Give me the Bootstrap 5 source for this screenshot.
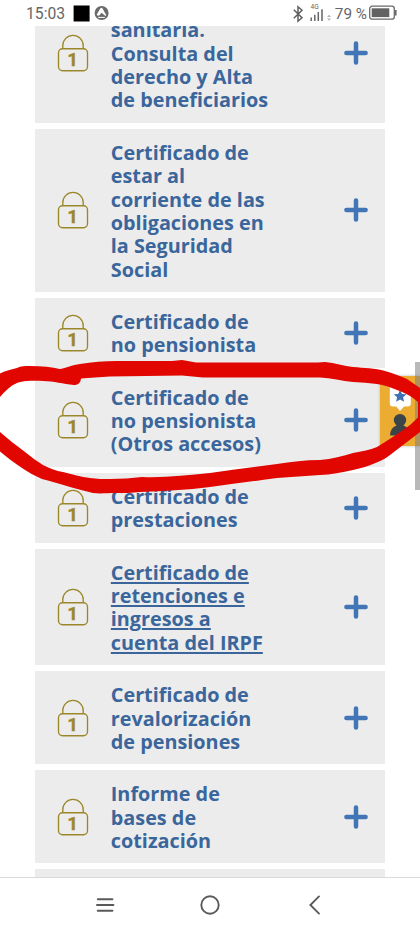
<!DOCTYPE html>
<html lang="es">
<head>
<meta charset="utf-8">
<meta name="viewport" content="width=device-width, initial-scale=1">
<title>Certificados</title>
<link href="https://cdn.jsdelivr.net/npm/bootstrap@5.3.0/dist/css/bootstrap.min.css" rel="stylesheet">
<style>
  body { font-family: "Open Sans", "Noto Sans", sans-serif; background: #fff; }
  .screen { width: 420px; height: 933px; }
  .status { height: 26px; padding: 1px 23px 0 26px; color: #666; font-family: Roboto, sans-serif; font-size: 15.7px; line-height: 26px; }
  .clock { width: 39px; }
  .charge { font-size: 15.3px; }
  .radios { margin-right: 1.5px; }
  .battery { margin-left: 2px; margin-top: -1px; }
  .viewer { height: 851px; }
  .services { margin: -43.1px 35px 0; gap: 5.83px; }
  .service { background: #ececec; padding: 11.67px 16px 11.67px 22px; }
  .service-first { height: 140px; }
  .service-title { position: relative; top: .5px; width: 200px; margin-left: 21.8px; color: #3a669b; font-weight: 700; font-size: 19.82px; line-height: 23.33px; white-space: nowrap; }
  .service-first .service-title { padding-top: 23.33px; }
  .service-title u { text-decoration-thickness: 1.6px; text-underline-offset: 2px; }
  .softkeys { height: 56px; border-top: 1px solid #dadada; padding: 0 94px; }
  .assist { right: 0; top: 375.5px; width: 40px; height: 70.5px; background: #ebac31; box-shadow: 0 0 3px #bbb; }
  .scroller { right: 0; top: 362px; width: 5px; height: 128px; background: #808080; opacity: .55; }
  .stroke-layer { left: 0; top: 0; }
</style>
</head>
<body>
<svg class="d-none">
  <symbol id="lock" viewBox="0 0 32 38">
    <g fill="none" stroke="#9b872b" stroke-width="1.35">
      <rect x="1.5" y="14.7" width="29" height="22" rx="4"/>
      <path d="M5.8 14.5V11.6a10.2 10.2 0 0 1 20.4 0v2.9"/>
    </g>
    <text x="15.6" y="32.4" text-anchor="middle" font-family="Roboto, sans-serif" font-weight="700" font-size="18.8" fill="#9b872b" stroke="#9b872b" stroke-width=".3">1</text>
  </symbol>
  <symbol id="plus" viewBox="0 0 24 24">
    <path d="M2.4 12h19.2M12 2.4v19.2" stroke="#4175b5" stroke-width="4.5" stroke-linecap="round"/>
  </symbol>
</svg>
<div class="screen position-relative overflow-hidden">
  <header class="status d-flex align-items-center justify-content-between">
    <div class="d-flex align-items-center">
      <span class="clock">15:03</span>
      <svg class="ms-2" width="36" height="18" viewBox="0 0 36 18">
        <path d="M.6 .5h16v16H.6z"/>
        <circle cx="28.6" cy="8" r="7" fill="#6a6a6a"/>
        <path d="M27.4 3.300L23.900 9.200q-.5 1.300.8 1.300h1.600l2.200-2.800 4 3.200.8-.6-3.600-6.500q-1.100-1.700-2.300-.5z" fill="#fff"/>
        <path d="M25.200 12.400h6.600" stroke="#fff" stroke-width="1"/>
      </svg>
    </div>
    <div class="d-flex align-items-center">
      <svg class="radios" width="41" height="26" viewBox="292 0 41 26">
        <path d="M293.8 8.7l8.2 8-4 3.5V5.8l4 3.5-8.2 8" fill="none" stroke="#5f5f5f" stroke-width="1.5"/>
        <text x="310.5" y="8" font-family="Roboto, sans-serif" font-size="6.6" fill="#666">4G</text>
        <path d="M311.2 16.5V20M314.8 13.8V20M318.3 11V20M322 8.2V20" stroke="#666" stroke-width="1.5"/>
        <path d="M327 16l2-2.3 2 2.3zM327 17.5l2 2.3 2-2.3z" fill="#b5b5b5"/>
      </svg>
      <span class="charge">79 %</span>
      <svg class="battery" width="28" height="16" viewBox="0 0 28 16">
        <rect x=".7" y="1.2" width="24.6" height="13" rx="2.5" fill="none" stroke="#6a6a6a" stroke-width="1.3"/>
        <path d="M2.7 3.3h17.6v8.8H2.7z" fill="#626262"/>
        <path d="M26.8 5v5.6" stroke="#6a6a6a" stroke-width="1.6"/>
      </svg>
    </div>
  </header>

  <main class="viewer overflow-hidden">
    <div class="services d-flex flex-column">
      <div class="service service-first d-flex align-items-center">
        <svg width="32" height="38"><use href="#lock"/></svg>
        <div class="service-title">sanitaria.<br>Consulta del<br>derecho y Alta<br>de beneficiarios</div>
        <svg class="ms-auto" width="26" height="24"><use href="#plus"/></svg>
      </div>
      <div class="service d-flex align-items-center">
        <svg width="32" height="38"><use href="#lock"/></svg>
        <div class="service-title">Certificado de<br>estar al<br>corriente de las<br>obligaciones en<br>la Seguridad<br>Social</div>
        <svg class="ms-auto" width="26" height="24"><use href="#plus"/></svg>
      </div>
      <div class="service d-flex align-items-center">
        <svg width="32" height="38"><use href="#lock"/></svg>
        <div class="service-title">Certificado de<br>no pensionista</div>
        <svg class="ms-auto" width="26" height="24"><use href="#plus"/></svg>
      </div>
      <div class="service d-flex align-items-center">
        <svg width="32" height="38"><use href="#lock"/></svg>
        <div class="service-title">Certificado de<br>no pensionista<br>(Otros accesos)</div>
        <svg class="ms-auto" width="26" height="24"><use href="#plus"/></svg>
      </div>
      <div class="service d-flex align-items-center">
        <svg width="32" height="38"><use href="#lock"/></svg>
        <div class="service-title">Certificado de<br>prestaciones</div>
        <svg class="ms-auto" width="26" height="24"><use href="#plus"/></svg>
      </div>
      <div class="service d-flex align-items-center">
        <svg width="32" height="38"><use href="#lock"/></svg>
        <div class="service-title"><u>Certificado de<br>retenciones e<br>ingresos a<br>cuenta del IRPF</u></div>
        <svg class="ms-auto" width="26" height="24"><use href="#plus"/></svg>
      </div>
      <div class="service d-flex align-items-center">
        <svg width="32" height="38"><use href="#lock"/></svg>
        <div class="service-title">Certificado de<br>revalorización<br>de pensiones</div>
        <svg class="ms-auto" width="26" height="24"><use href="#plus"/></svg>
      </div>
      <div class="service d-flex align-items-center">
        <svg width="32" height="38"><use href="#lock"/></svg>
        <div class="service-title">Informe de<br>bases de<br>cotización</div>
        <svg class="ms-auto" width="26" height="24"><use href="#plus"/></svg>
      </div>
      <div class="service"></div>
    </div>
  </main>

  <nav class="softkeys d-flex align-items-center justify-content-between" aria-label="Sistema">
    <svg width="22" height="22" viewBox="0 0 22 22"><path d="M3.8 4.2h14.6M3 10h16.4M3.8 15.8h14.6" stroke="#5a5a5a" stroke-width="2" stroke-linecap="round"/></svg>
    <svg width="22" height="22" viewBox="0 0 22 22"><circle cx="11" cy="10" r="8.7" fill="none" stroke="#5a5a5a" stroke-width="1.9"/></svg>
    <svg width="22" height="22" viewBox="0 0 22 22"><path d="M15 1.4L6.4 10l8.6 8.6" fill="none" stroke="#5a5a5a" stroke-width="1.9" stroke-linecap="round"/></svg>
  </nav>

  <div class="assist position-absolute">
    <svg width="40" height="70" viewBox="380 375.5 40 70">
      <path d="M392.5 384h15.500q2.800 0 2.800 2.800v16q0 3.200-3.200 3.200h-3.600l-4 4.500-3.700-4.500h-3.300q-3.200 0-3.200-3.200v-16q0-2.800 2.700-2.800z" fill="#fff"/>
      <path d="M400.100 389.300l1.900 4.100 4.500.4-3.400 3 1 4.500-4-2.400-4 2.400 1-4.500-3.400-3 4.500-.4z" fill="#3f72b4"/>
      <circle cx="400" cy="419.600" r="6.200" fill="#3b4449"/>
      <path d="M396.500 422h7v3q6.500 2.500 6.500 10h-20q0-7.500 6.500-10z" fill="#3b4449"/>
    </svg>
  </div>
  <div class="scroller position-absolute"></div>
  <svg class="stroke-layer position-absolute" width="420" height="933" viewBox="0 0 420 933">
    <path fill="#e10600" d="M0 373.500C5 371 10 369.500 17 368C21 366 25 366 30 366C42 366 52 367 60 369C66 368 72 365 80 364C92 362 104 361 117 361H172L182 360L196 362.500H318L325 362C335 363 344 366 353 367C364 368 375 368 385 371C393 373 400 376 407 379L420 388V432C410 440 400 447 390 455C385 459 380 461 373 464C366 467 360 468.500 353 470C342 472 331 475 320 475C306 476 291 477 277 478C255 481 233 484 210 487C187 490 163 491 140 492C132 493 124 493 115 493C108 493 100 494 93 493C85 491 77 489 70 487C60 484 51 481 42 479C35 476 28 472 22 468C14 463 7 457 0 451.500V432C8 439 17 446 25 452C31 457 37 461 43 465C49 468 56 471 63 472C72 474 81 477 90 478C97 479 103 479 110 479C121 479 132 478 142 477C165 478 187 475 210 473C232 470 255 467 277 464C291 462 305 460 320 460C332 459 343 456 353 453C362 451 370 450 377 447C389 440 400 432 410 425L418 417.500V402L413 398C409 395 403 392 397 390C390 387 384 385 377 384C369 383 361 382.500 353 382C342 381 331 378 320 377.500H203L182 375.500C158 376 134 376 110 376.500C100 377 90 378 81 378.500C80.500 383 78 385 74 385C63 384 54 381 43 381C38 380.500 32 380.500 27 381C23 381 20 382 17 383C10 386 5 391 0 397Z"/>
  </svg>
</div>
<script src="https://cdn.jsdelivr.net/npm/bootstrap@5.3.0/dist/js/bootstrap.bundle.min.js"></script>
</body>
</html>
